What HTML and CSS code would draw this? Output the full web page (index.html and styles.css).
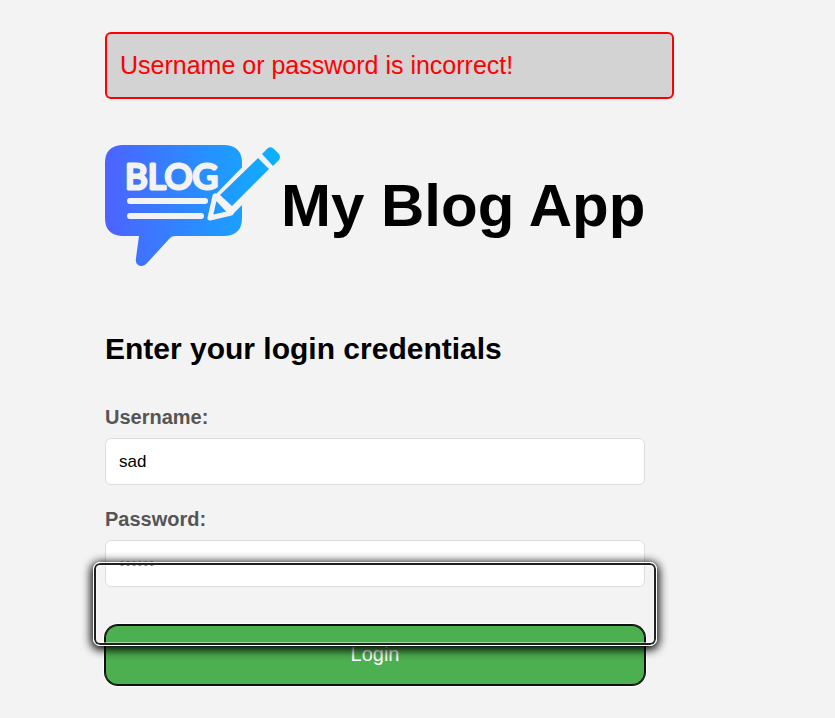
FILE: index.html
```html
<!DOCTYPE html>
<html lang="en">
<head>
<meta charset="utf-8">
<title>My Blog App</title>
<link rel="stylesheet" href="styles.css">
</head>
<body>
<main class="page">
  <p class="error" role="alert">Username or password is incorrect!</p>
  <header class="brand">
    <svg class="logo" viewBox="0 0 176 122" role="img" aria-label="Blog">
      <defs>
        <linearGradient id="blue" gradientUnits="userSpaceOnUse" x1="0" y1="0" x2="176" y2="0">
          <stop offset="0" stop-color="#4d62ff"/>
          <stop offset="1" stop-color="#0bb2ff"/>
        </linearGradient>
      </defs>
      <path fill="url(#blue)" d="M17 0H120Q137 1 137 18V73Q137 90 120 91H70Q67 91 65 93L43 117Q38 123 33 120Q30 118 31 113L34 91H17Q0 90 0 73V18Q0 1 17 0Z"/>
      <text class="logo-text" x="20" y="44">BLOG</text>
      <path class="logo-line" d="M25 56H100M25 71H96"/>
      <path class="pencil-gap" d="M109 51L153 6L175 22L128 69Z"/>
      <path class="pencil-tip" d="M110 51L105 73L126 68Z"/>
      <path fill="url(#blue)" d="M115 50L153 13L164 24L127 61Z"/>
      <path fill="url(#blue)" d="M157 9L163 3Q166 1 169 4L174 9Q176 12 174 15L168 21Z"/>
    </svg>
    <h1 class="title">My Blog App</h1>
  </header>
  <form class="login">
    <h2 class="heading">Enter your login credentials</h2>
    <label class="label" for="username">Username:</label>
    <input class="field" id="username" type="text" value="sad">
    <label class="label" for="password">Password:</label>
    <input class="field" id="password" type="password" value="secret">
    <div class="actions">
      <button class="submit" type="submit">Login</button>
      <span class="focus-frame"></span>
    </div>
  </form>
</main>
</body>
</html>
```
FILE: styles.css
```css
* {
  box-sizing: border-box;
}

body {
  margin: 0;
  background: #f3f3f3;
  color: #000;
  font-family: "Liberation Sans", Arial, sans-serif;
}

.page {
  max-width: 750px;
  padding: 32px 105px;
}

.error {
  margin: 0 -29px 46px 0;
  padding: 17px 13px;
  border: 2px solid #f00;
  border-radius: 6px;
  background: #d3d3d3;
  color: #f00;
  font-size: 25px;
  line-height: 29px;
}

.brand {
  display: flex;
  align-items: center;
  white-space: nowrap;
}

.logo {
  flex: none;
  width: 176px;
  height: 122px;
}

.logo-text {
  fill: #f3f3f3;
  stroke: #f3f3f3;
  stroke-width: 3;
  stroke-linejoin: round;
  font: 400 35px Lato, sans-serif;
}

.logo-line {
  fill: none;
  stroke: #f3f3f3;
  stroke-width: 6;
  stroke-linecap: round;
}

.pencil-gap {
  fill: #f3f3f3;
}

.pencil-tip {
  fill: url(#blue);
  stroke: #f3f3f3;
  stroke-width: 5;
  stroke-linejoin: round;
}

.title {
  margin: 0;
  font-size: 60px;
  line-height: 68px;
}

.heading {
  margin: 65px 0 40px;
  font-size: 30px;
  line-height: 34px;
}

.label {
  display: block;
  margin-bottom: 9px;
  color: #555;
  font-size: 20px;
  font-weight: 700;
  line-height: 23px;
}

.field {
  display: block;
  width: 100%;
  height: 47px;
  margin-bottom: 23px;
  padding: 0 13px;
  border: 1px solid #ddd;
  border-radius: 6px;
  background: #fff;
  color: #000;
  font: 17px "Liberation Sans", Arial, sans-serif;
}

.actions {
  position: relative;
  margin-top: 38px;
}

.submit {
  display: block;
  width: 100%;
  height: 60px;
  padding: 0 6px 2px;
  border: 0;
  border-radius: 13px;
  background: #4caf50;
  box-shadow: inset 0 0 0 1px #101010, 0 0 0 1px #101010, 0 0 0 2px #fff;
  color: #fff;
  font: 20px "Liberation Sans", Arial, sans-serif;
}

.focus-frame {
  position: absolute;
  inset: -63px -12px auto -12px;
  height: 84px;
  border: 1px solid #fff;
  border-radius: 7px;
  box-shadow: inset 0 0 0 2px #202020, inset 0 0 0 3px #ffffff80, 0 2px 10px 2px #000;
  pointer-events: none;
}
```
